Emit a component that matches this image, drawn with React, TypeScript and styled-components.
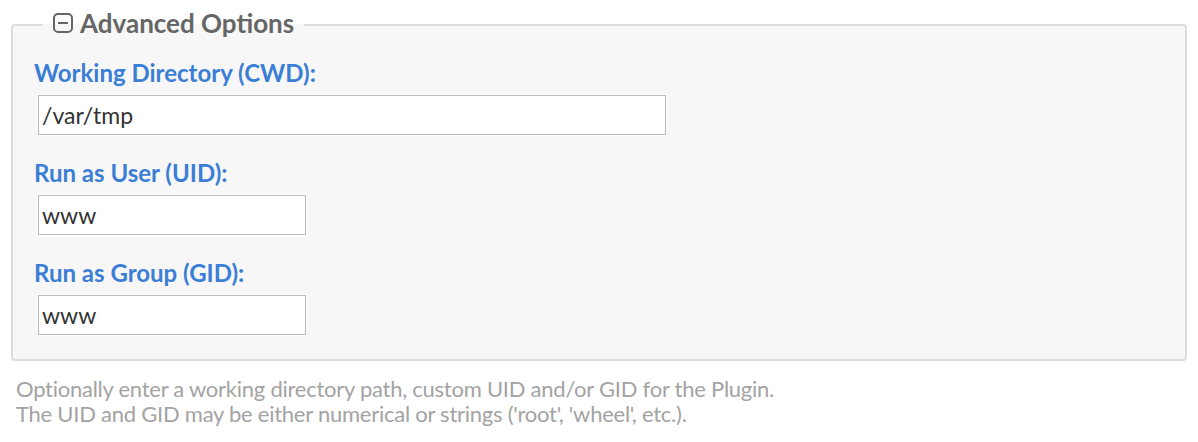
import React from "react";
import styled, { createGlobalStyle } from "styled-components";

const Global = createGlobalStyle`
  html, body { margin: 0; padding: 0; background: #ffffff; }
  body { font-family: Lato, "Open Sans", sans-serif; }
`;

const Page = styled.div`
  padding: 8px 11px 0 11px;
`;

const Box = styled.fieldset`
  margin: 0;
  padding: 17px 20px 24px 21px;
  border: 2px solid #dddddd;
  border-radius: 4px;
  background: #f7f7f7;
  display: flex;
  flex-direction: column;
  gap: 24px;
`;

const Legend = styled.legend`
  margin-left: 9px;
  padding: 0 10px 4px 10px;
  display: flex;
  align-items: center;
  gap: 7px;
  font-family: Lato, sans-serif;
  font-weight: bold;
  font-size: 26px;
  line-height: 30px;
  color: #666666;
`;

const Field = styled.div`
  display: flex;
  flex-direction: column;
  gap: 8px;
`;

const Label = styled.label`
  font-family: Lato, sans-serif;
  font-weight: bold;
  font-size: 24px;
  line-height: 28px;
  color: #3b7ed6;
`;

const Input = styled.input<{ $w: number }>`
  box-sizing: border-box;
  margin: 0 0 0 4px;
  width: ${(p) => p.$w}px;
  height: 40px;
  padding: 0 3px;
  border: 1px solid #bbbbbb;
  background: #ffffff;
  box-shadow: 0 0 0 1px #ffffff;
  font-family: Lato, sans-serif;
  font-size: 23px;
  color: #333333;
  outline: none;
`;

const Help = styled.div`
  margin-top: 15px;
  padding-left: 5px;
  font-family: Lato, sans-serif;
  font-size: 22px;
  letter-spacing: -0.25px;
  line-height: 25px;
  color: #a3a3a3;
`;

const MinusIcon = () => (
  <svg width="20" height="20" viewBox="0 0 20 20" fill="none">
    <rect x="1" y="1" width="18" height="18" rx="4" stroke="#666" strokeWidth="2" />
    <line x1="5" y1="10" x2="15" y2="10" stroke="#666" strokeWidth="2" />
  </svg>
);

export default function App() {
  return (
    <Page>
      <Global />
      <Box>
        <Legend>
          <MinusIcon />
          Advanced Options
        </Legend>
        <Field>
          <Label>Working Directory (CWD):</Label>
          <Input $w={628} defaultValue="/var/tmp" />
        </Field>
        <Field>
          <Label>Run as User (UID):</Label>
          <Input $w={268} defaultValue="www" />
        </Field>
        <Field>
          <Label>Run as Group (GID):</Label>
          <Input $w={268} defaultValue="www" />
        </Field>
      </Box>
      <Help>
        Optionally enter a working directory path, custom UID and/or GID for the Plugin.
        <br />
        The UID and GID may be either numerical or strings ('root', 'wheel', etc.).
      </Help>
    </Page>
  );
}
